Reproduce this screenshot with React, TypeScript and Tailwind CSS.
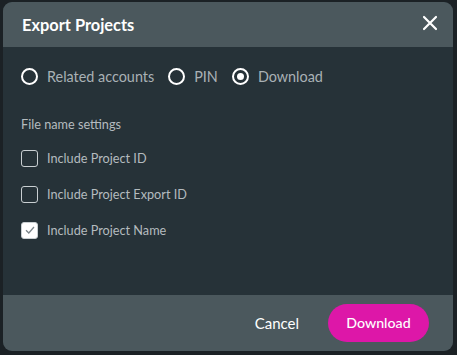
import React from "react";

function Radio({ checked, label }: { checked?: boolean; label: string }) {
  return (
    <label className="flex items-center gap-[9px]">
      <span className="w-[17px] h-[17px] rounded-full border-2 border-white flex items-center justify-center">
        {checked && <span className="w-[7px] h-[7px] rounded-full bg-white" />}
      </span>
      <span className="text-[14.4px] text-[#a9b1b5]">{label}</span>
    </label>
  );
}

function Check({ checked, label }: { checked?: boolean; label: string }) {
  return (
    <div className="flex items-center gap-[9px] h-[17px]">
      <span
        className={
          "w-[17px] h-[17px] rounded-[3px] border border-[#c9cfd2] flex items-center justify-center " +
          (checked ? "bg-white" : "")
        }
      >
        {checked && (
          <svg width="12" height="12" viewBox="0 0 12 12" fill="none">
            <path d="M2 6.3 L4.8 9 L10 3" stroke="#7c868b" strokeWidth="1.3" />
          </svg>
        )}
      </span>
      <span className="text-[12.7px] text-[#b4bbbf]">{label}</span>
    </div>
  );
}

export default function App() {
  return (
    <div
      className="w-[457px] h-[355px] bg-[#1b2125] pt-[2px] pl-[3px]"
      style={{ fontFamily: "Lato, 'Noto Sans', sans-serif" }}
    >
      <div className="w-[450px] h-[349px] rounded-[9px] overflow-hidden flex flex-col bg-[#263238]">
        <div className="h-[45px] bg-[#4b585d] flex items-center justify-between pl-[19px] pr-[15px] shrink-0">
          <span className="text-white font-bold text-[16.4px] mt-[2px]">Export Projects</span>
          <svg width="16" height="16" viewBox="0 0 16 16" className="mt-[-4px]">
            <path d="M2 2 L14 14 M14 2 L2 14" stroke="white" strokeWidth="2.2" strokeLinecap="round" />
          </svg>
        </div>
        <div className="flex-1 pl-[18px]">
          <div className="flex items-center gap-[14px] mt-[19px]">
            <Radio label="Related accounts" />
            <Radio label="PIN" />
            <Radio checked label="Download" />
          </div>
          <div className="mt-[27px] text-[12.7px] text-[#b4bbbf]">File name settings</div>
          <div className="flex flex-col gap-[19px] mt-[16px]">
            <Check label="Include Project ID" />
            <Check label="Include Project Export ID" />
            <Check checked label="Include Project Name" />
          </div>
        </div>
        <div className="h-[56px] bg-[#4b585d] flex items-center justify-end gap-[29px] pr-[24px] shrink-0">
          <span className="text-white text-[15px]">Cancel</span>
          <button className="w-[101px] h-[38px] rounded-full bg-[#dd17a8] text-white text-[14.2px] font-medium">
            Download
          </button>
        </div>
      </div>
    </div>
  );
}
